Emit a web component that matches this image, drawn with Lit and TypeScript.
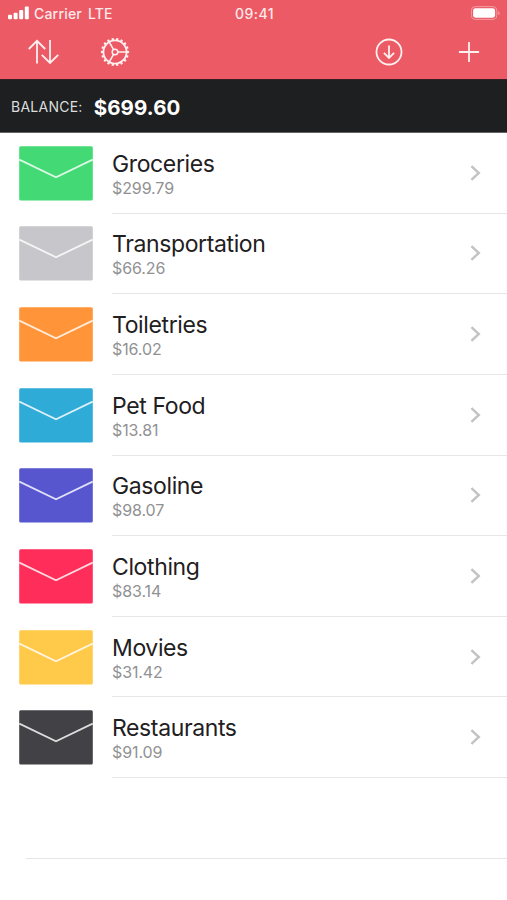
import { LitElement, html, css, svg } from "lit";
import { customElement, property } from "lit/decorators.js";

interface Envelope {
  name: string;
  amount: string;
  color: string;
}

const ENVELOPES: Envelope[] = [
  { name: "Groceries", amount: "$299.79", color: "#43da75" },
  { name: "Transportation", amount: "$66.26", color: "#c7c6cb" },
  { name: "Toiletries", amount: "$16.02", color: "#ff9538" },
  { name: "Pet Food", amount: "$13.81", color: "#2fabd8" },
  { name: "Gasoline", amount: "$98.07", color: "#5756ce" },
  { name: "Clothing", amount: "$83.14", color: "#ff2d59" },
  { name: "Movies", amount: "$31.42", color: "#ffc94a" },
  { name: "Restaurants", amount: "$91.09", color: "#424146" },
];

const TEETH = Array.from({ length: 18 }, (_, i) => i * 20 + 10);

@customElement("envelope-row")
class EnvelopeRow extends LitElement {
  @property() name = "";
  @property() amount = "";
  @property() color = "";

  static styles = css`
    :host {
      display: flex;
      height: 80.64px;
      padding-left: 19px;
      box-sizing: border-box;
    }
    .envelope {
      flex: none;
      width: 74px;
      height: 55px;
      margin: 12.8px 19px 0 0;
    }
    .body {
      flex: 1;
      display: flex;
      justify-content: space-between;
      border-bottom: 1px solid #e6e6e7;
    }
    .text {
      padding-top: 15.8px;
      white-space: nowrap;
    }
    .name {
      font-size: 23px;
      line-height: 31px;
      color: #1f2022;
      letter-spacing: -0.38px;
    }
    .amount {
      margin-top: -1px;
      font-size: 16px;
      line-height: 18px;
      color: #919193;
      letter-spacing: -0.1px;
    }
    .chevron {
      width: 14px;
      height: 20px;
      margin: 29.8px 25px 0 0;
    }
  `;

  render() {
    return html`
      <svg class="envelope" viewBox="0 0 74 55">
        <rect x="0.2" y="0.2" width="73.6" height="54.4" rx="1.5" fill=${this.color} />
        <path d="M0.3 13.6 L37 31.2 L73.7 13.6" fill="none" stroke="#fff" stroke-opacity="0.82" stroke-width="1.8" />
      </svg>
      <div class="body">
        <div class="text">
          <div class="name">${this.name}</div>
          <div class="amount">${this.amount}</div>
        </div>
        <svg class="chevron" viewBox="0 0 14 20">
          <path d="M3.4 3.2 L10.8 10 L3.4 16.8" fill="none" stroke="#c3c3c5" stroke-width="2.4" />
        </svg>
      </div>
    `;
  }
}

@customElement("app-root")
class AppRoot extends LitElement {
  static styles = css`
    :host {
      display: block;
      width: 507px;
      height: 900px;
      overflow: hidden;
      background: #fff;
      font-family: Inter, "Liberation Sans", sans-serif;
    }
    .header {
      height: 79px;
      background: #eb5a65;
      color: #fff;
    }
    .status {
      display: grid;
      grid-template-columns: 1fr auto 1fr;
      align-items: center;
      height: 26px;
      padding: 0 6px 0 8px;
      font-size: 14px;
      font-weight: 500;
      color: #ffe9ea;
    }
    .carrier {
      display: flex;
      align-items: center;
      gap: 5px;
      letter-spacing: 0.2px;
      word-spacing: 2px;
    }
    .time {
      letter-spacing: 0.5px;
    }
    .signal {
      width: 21px;
      height: 14px;
    }
    .battery {
      width: 30px;
      height: 14px;
      justify-self: end;
    }
    .toolbar {
      display: flex;
      height: 52px;
      align-items: center;
      padding: 0 21px 0 27px;
    }
    .icon {
      width: 34px;
      height: 34px;
      fill: none;
      stroke: #fff0f0;
      stroke-width: 1.8;
    }
    .gear {
      margin-left: 37px;
    }
    .down {
      margin-left: auto;
    }
    .plus {
      margin-left: 46px;
    }
    .balance {
      display: flex;
      align-items: center;
      height: 54px;
      padding: 0 11px;
      gap: 11px;
      box-sizing: border-box;
      background: #1d1f20;
      border-top: 1px solid #351f23;
      border-bottom: 1px solid #626364;
      color: #fff;
    }
    .label {
      font-size: 14px;
      color: #dcdddd;
      letter-spacing: 0.25px;
    }
    .total {
      padding-top: 2px;
      font-size: 20.5px;
      font-weight: 700;
      letter-spacing: 0.1px;
    }
    .blank {
      height: 80.64px;
      margin-left: 26px;
      box-sizing: border-box;
      border-bottom: 1px solid #e6e6e7;
    }
  `;

  render() {
    return html`
      <div class="header">
        <div class="status">
          <div class="carrier">
            <svg class="signal" viewBox="0 0 21 14" fill="#fff">
              <rect x="0" y="8.7" width="4" height="4.6" rx="1" />
              <rect x="5.6" y="6.8" width="4" height="6.5" rx="1" />
              <rect x="11.2" y="3.9" width="4" height="9.4" rx="1" />
              <rect x="16.8" y="0.6" width="4" height="12.7" rx="1" />
            </svg>
            <span>Carrier LTE</span>
          </div>
          <span class="time">09:41</span>
          <svg class="battery" viewBox="0 0 30 14">
            <rect x="0.4" y="0.6" width="25.4" height="12.8" rx="3.8" fill="none" stroke="#f49ca2" />
            <rect x="2.1" y="2.3" width="22" height="9.4" rx="2.4" fill="#fff" />
            <path d="M27.4 4.9 Q29.6 7 27.4 9.1 Z" fill="#f8b4b8" />
          </svg>
        </div>
        <div class="toolbar">
          <svg class="icon" viewBox="0 0 34 34">
            <path d="M10 28.5 V5.8 M1.8 14 L10 5.8 L18.2 14" />
            <path d="M23 5 V28 M14.8 19.8 L23 28 L31.2 19.8" />
          </svg>
          <svg class="icon gear" viewBox="0 0 34 34">
            <circle cx="17" cy="17" r="11.6" />
            <circle cx="17" cy="17" r="2.8" stroke-width="1.5" />
            <path stroke-width="1.5" d="M19.8 17 H28.5 M15.6 14.6 L11.2 7 M15.6 19.4 L11.2 27" />
            ${TEETH.map(
              (a) => svg`<path stroke-width="2.2" transform="rotate(${a} 17 17)" d="M17 5 V2.9" />`
            )}
          </svg>
          <svg class="icon down" viewBox="0 0 34 34">
            <circle cx="17" cy="17" r="12.5" />
            <path d="M17 10.5 V23 M11.9 17.9 L17 23 L22.1 17.9" />
          </svg>
          <svg class="icon plus" viewBox="0 0 34 34">
            <path d="M17 6.9 V27.1 M6.9 17 H27.1" />
          </svg>
        </div>
      </div>
      <div class="balance">
        <span class="label">BALANCE:</span>
        <span class="total">$699.60</span>
      </div>
      ${ENVELOPES.map(
        (e) => html`<envelope-row .name=${e.name} .amount=${e.amount} .color=${e.color}></envelope-row>`
      )}
      <div class="blank"></div>
    `;
  }
}
